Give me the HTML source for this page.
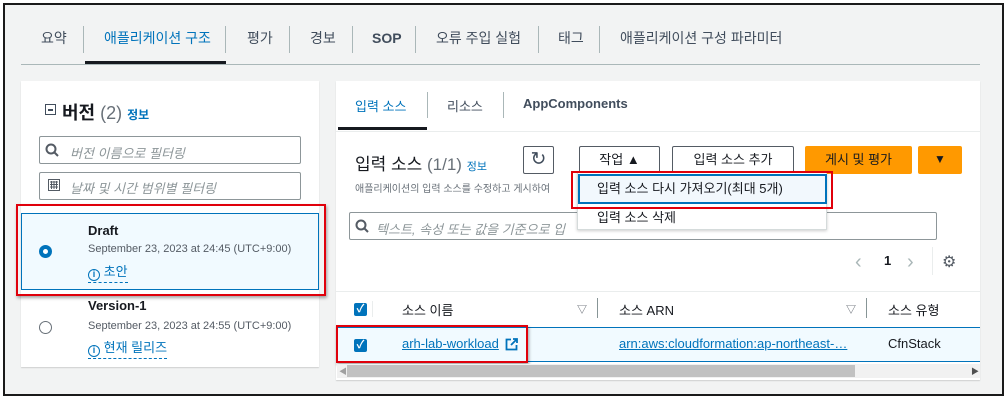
<!DOCTYPE html>
<html><head><meta charset="utf-8"><style>
*{box-sizing:border-box;margin:0;padding:0}
body{width:1008px;height:400px;background:#fff;font-family:"Liberation Sans","Noto Sans CJK KR",sans-serif;position:relative;overflow:hidden;color:#16191f}
.a{position:absolute}
.frame{left:3px;top:3px;width:1001px;height:393px;border:2px solid #1a1a1a;background:#f2f3f3}
.tab{top:28px;font-size:14px;color:#414d5c}
.sep{top:26px;width:1px;height:27px;background:#aab7b8}
.panel{background:#fff;box-shadow:0 1px 1px rgba(0,0,0,.15)}
.inp{border:1px solid #8d9699;border-radius:2px;background:#fff;font-size:13px;color:#8d9699;font-style:italic}
.btn{border:1px solid #545b64;border-radius:2px;background:#fff;font-size:13px;color:#16191f;text-align:center;line-height:26px}
.red{border:2.5px solid #e0000b;box-shadow:1px 2px 3px rgba(0,0,0,.35)}
.cb{width:13px;height:13px;background:#0073bb;border-radius:2px;color:#fff;font-size:11px;line-height:13px;text-align:center;font-weight:bold}
.lnk{color:#0073bb}
</style></head><body>
<div class="a frame"></div>
<div class="a tab" style="left:41px">요약</div>
<div class="a sep" style="left:83px"></div>
<div class="a tab" style="left:104px;color:#0073bb">애플리케이션 구조</div>
<div class="a" style="left:85px;top:61px;width:141px;height:3px;background:#16191f"></div>
<div class="a sep" style="left:225px"></div>
<div class="a tab" style="left:247px">평가</div>
<div class="a sep" style="left:289px"></div>
<div class="a tab" style="left:310px">경보</div>
<div class="a sep" style="left:352px"></div>
<div class="a tab" style="left:372px;top:30px;font-weight:bold">SOP</div>
<div class="a sep" style="left:415px"></div>
<div class="a tab" style="left:436px">오류 주입 실험</div>
<div class="a sep" style="left:538px"></div>
<div class="a tab" style="left:558px">태그</div>
<div class="a sep" style="left:599px"></div>
<div class="a tab" style="left:620px">애플리케이션 구성 파라미터</div>
<div class="a" style="left:21px;top:64px;width:959px;height:1px;background:#aab7b8"></div>

<div class="a panel" style="left:21px;top:81px;width:298px;height:286px"></div>
<div class="a" style="left:45px;top:104px;width:11px;height:11px;border:1.5px solid #414d5c"></div>
<div class="a" style="left:48px;top:109px;width:5px;height:1.5px;background:#414d5c"></div>
<div class="a" style="left:62px;top:99px;font-size:18px;font-weight:bold">버전 <span style="font-weight:normal;color:#687078">(2)</span> <span class="lnk" style="font-size:12px">정보</span></div>
<div class="a inp" style="left:39px;top:136px;width:262px;height:28px;padding:6px 0 0 30px">버전 이름으로 필터링</div>
<svg class="a" style="left:45px;top:143px" width="14" height="14"><circle cx="6" cy="6" r="4.5" fill="none" stroke="#545b64" stroke-width="2"/><path d="M9 9l4 4" stroke="#545b64" stroke-width="2"/></svg>
<div class="a inp" style="left:39px;top:172px;width:262px;height:28px;padding:5px 0 0 30px">날짜 및 시간 범위별 필터링</div>
<svg class="a" style="left:48px;top:179px" width="12" height="12"><rect x="0.5" y="0.5" width="11" height="11" fill="none" stroke="#545b64"/><path d="M2 3h8M2 5.5h8M2 8h8M3.5 2v8M6 2v8M8.5 2v8" stroke="#545b64"/></svg>

<div class="a" style="left:21px;top:213px;width:298px;height:77px;background:#f1faff;border:1px solid #0073bb"></div>
<div class="a red" style="left:16px;top:204px;width:310px;height:92px"></div>
<div class="a" style="left:39px;top:245px;width:13px;height:13px;border-radius:50%;border:4px solid #0073bb;background:#fff"></div>
<div class="a" style="left:88px;top:223px;font-size:13px;font-weight:bold">Draft</div>
<div class="a" style="left:88px;top:243px;font-size:11px;color:#545b64">September 23, 2023 at 24:45 (UTC+9:00)</div>
<div class="a lnk" style="left:88px;top:261px;font-size:13px;border-bottom:1px dashed #0073bb;padding-bottom:1px"><span style="display:inline-block;width:12px;height:12px;border:1.5px solid #0073bb;border-radius:50%;font-size:9px;text-align:center;line-height:9px;font-weight:bold;vertical-align:-1px">i</span> 초안</div>
<div class="a" style="left:88px;top:298px;font-size:13px;font-weight:bold">Version-1</div>
<div class="a" style="left:39px;top:321px;width:13px;height:13px;border-radius:50%;border:1px solid #687078;background:#fff"></div>
<div class="a" style="left:88px;top:320px;font-size:11px;color:#545b64">September 23, 2023 at 24:55 (UTC+9:00)</div>
<div class="a lnk" style="left:88px;top:337px;font-size:13px;border-bottom:1px dashed #0073bb;padding-bottom:1px"><span style="display:inline-block;width:12px;height:12px;border:1.5px solid #0073bb;border-radius:50%;font-size:9px;text-align:center;line-height:9px;font-weight:bold;vertical-align:-1px">i</span> 현재 릴리즈</div>

<div class="a panel" style="left:336px;top:81px;width:644px;height:299px"></div>
<div class="a" style="left:336px;top:131px;width:644px;height:1px;background:#eaeded"></div>
<div class="a lnk" style="left:355px;top:96px;font-size:13px">입력 소스</div>
<div class="a" style="left:338px;top:127px;width:89px;height:3px;background:#16191f"></div>
<div class="a" style="left:427px;top:92px;width:1px;height:26px;background:#aab7b8"></div>
<div class="a" style="left:447px;top:96px;font-size:13px;color:#414d5c">리소스</div>
<div class="a" style="left:503px;top:92px;width:1px;height:26px;background:#aab7b8"></div>
<div class="a" style="left:523px;top:96px;font-size:13px;font-weight:bold;color:#414d5c">AppComponents</div>

<div class="a" style="left:355px;top:150px;font-size:17px">입력 소스 <span style="color:#687078">(1/1)</span> <span class="lnk" style="font-size:11px">정보</span></div>
<div class="a btn" style="left:523px;top:146px;width:31px;height:28px;font-size:19px;color:#414d5c">↻</div>
<div class="a btn" style="left:579px;top:146px;width:81px;height:28px">작업 ▲</div>
<div class="a btn" style="left:672px;top:146px;width:122px;height:28px">입력 소스 추가</div>
<div class="a" style="left:805px;top:146px;width:107px;height:28px;background:#ff9900;border-radius:2px;font-size:13px;text-align:center;line-height:27px">게시 및 평가</div>
<div class="a" style="left:918px;top:146px;width:44px;height:28px;background:#ff9900;border-radius:2px;font-size:12px;text-align:center;line-height:27px">▼</div>
<div class="a" style="left:355px;top:180px;font-size:10px;color:#687078">애플리케이션의 입력 소스를 수정하고 게시하여</div>
<div class="a inp" style="left:349px;top:212px;width:588px;height:28px;padding:6px 0 0 26px">텍스트, 속성 또는 값을 기준으로 입</div>
<svg class="a" style="left:355px;top:219px" width="14" height="14"><circle cx="6" cy="6" r="4.5" fill="none" stroke="#545b64" stroke-width="2"/><path d="M9 9l4 4" stroke="#545b64" stroke-width="2"/></svg>

<div class="a" style="left:577px;top:172px;width:250px;height:58px;background:#fff;border:1px solid #d5dbdb;box-shadow:0 1px 3px rgba(0,0,0,.2)"></div>
<div class="a" style="left:578px;top:174px;width:249px;height:30px;background:#f2f8fd;border:2px solid #0073bb"></div>
<div class="a" style="left:597px;top:178px;font-size:13px">입력 소스 다시 가져오기(최대 5개)</div>
<div class="a" style="left:597px;top:207px;font-size:13px">입력 소스 삭제</div>
<div class="a red" style="left:571px;top:171px;width:262px;height:38px;box-shadow:none"></div>

<div class="a" style="left:855px;top:251px;font-size:20px;color:#aab7b8">‹</div>
<div class="a" style="left:884px;top:253px;font-size:13px;font-weight:bold">1</div>
<div class="a" style="left:907px;top:251px;font-size:20px;color:#aab7b8">›</div>
<div class="a" style="left:932px;top:247px;width:1px;height:28px;background:#eaeded"></div>
<div class="a" style="left:942px;top:252px;font-size:16px;color:#545b64">⚙</div>

<div class="a" style="left:336px;top:291px;width:644px;height:1px;background:#eaeded"></div>
<div class="a cb" style="left:354px;top:303px">✓</div>
<div class="a" style="left:372px;top:301px;width:1px;height:16px;background:#eaeded"></div>
<div class="a" style="left:402px;top:300px;font-size:13px">소스 이름</div>
<div class="a" style="left:577px;top:301px;font-size:10px;color:#545b64">▽</div>
<div class="a" style="left:597px;top:298px;width:1px;height:20px;background:#879596"></div>
<div class="a" style="left:619px;top:300px;font-size:13px">소스 ARN</div>
<div class="a" style="left:846px;top:301px;font-size:10px;color:#545b64">▽</div>
<div class="a" style="left:866px;top:298px;width:1px;height:20px;background:#879596"></div>
<div class="a" style="left:888px;top:300px;font-size:13px">소스 유형</div>
<div class="a" style="left:336px;top:327px;width:644px;height:35px;background:#f1faff;border-top:1px solid #0073bb;border-bottom:1px solid #0073bb"></div>
<div class="a cb" style="left:354px;top:339px">✓</div>
<div class="a lnk" style="left:402px;top:336px;font-size:13px;text-decoration:underline">arh-lab-workload</div>
<svg class="a" style="left:505px;top:338px" width="13" height="13"><path d="M6 1.5H1.5v10h10V7" fill="none" stroke="#0073bb" stroke-width="1.8"/><path d="M8 1h4v4M12 1L6 7" fill="none" stroke="#0073bb" stroke-width="1.8"/></svg>
<div class="a lnk" style="left:619px;top:336px;font-size:13px;text-decoration:underline">arn:aws:cloudformation:ap-northeast-…</div>
<div class="a" style="left:888px;top:336px;font-size:13px">CfnStack</div>
<div class="a red" style="left:336px;top:325px;width:192px;height:38px"></div>
<div class="a" style="left:337px;top:364px;width:643px;height:14px;background:#f1f1f1"></div>
<div class="a" style="left:347px;top:365px;width:508px;height:12px;background:#c1c1c1"></div>
<div class="a" style="left:339px;top:366px;font-size:8px;color:#a0a0a0">◀</div>
<div class="a" style="left:971px;top:366px;font-size:8px;color:#505050">▶</div>
</body></html>
